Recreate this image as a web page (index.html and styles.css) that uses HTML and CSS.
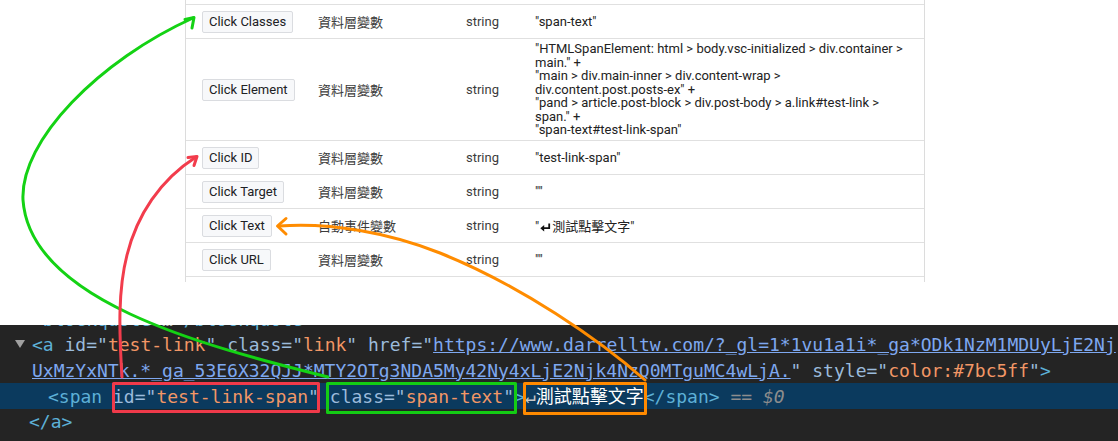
FILE: index.html
```html
<!DOCTYPE html>
<html lang="zh-Hant">
<head>
<meta charset="utf-8">
<title>Click variables</title>
<link rel="stylesheet" href="styles.css">
</head>
<body>
<div class="page">
  <section class="top">
    <div class="table">
      <div class="row spacer"></div>
      <div class="row">
        <div class="c1"><span class="btn">Click Classes</span></div>
        <div class="c2">資料層變數</div>
        <div class="c3">string</div>
        <div class="c4">"span-text"</div>
      </div>
      <div class="row tall">
        <div class="c1"><span class="btn">Click Element</span></div>
        <div class="c2">資料層變數</div>
        <div class="c3">string</div>
        <div class="c4 multi">"HTMLSpanElement: html &gt; body.vsc-initialized &gt; div.container &gt;<br>main." +<br>"main &gt; div.main-inner &gt; div.content-wrap &gt;<br>div.content.post.posts-ex" +<br>"pand &gt; article.post-block &gt; div.post-body &gt; a.link#test-link &gt;<br>span." +<br>"span-text#test-link-span"</div>
      </div>
      <div class="row">
        <div class="c1"><span class="btn">Click ID</span></div>
        <div class="c2">資料層變數</div>
        <div class="c3">string</div>
        <div class="c4">"test-link-span"</div>
      </div>
      <div class="row">
        <div class="c1"><span class="btn">Click Target</span></div>
        <div class="c2">資料層變數</div>
        <div class="c3">string</div>
        <div class="c4">""</div>
      </div>
      <div class="row">
        <div class="c1"><span class="btn">Click Text</span></div>
        <div class="c2">自動事件變數</div>
        <div class="c3">string</div>
        <div class="c4">"<svg class="ret" width="11" height="9" viewBox="0 0 11 9"><path d="M9.2 0.5 V5.2 H3.5" fill="none" stroke="#111" stroke-width="1.8"/><path d="M0.3 5.2 L4.2 2 L4.2 8.4 Z" fill="#111"/></svg>測試點擊文字"</div>
      </div>
      <div class="row">
        <div class="c1"><span class="btn">Click URL</span></div>
        <div class="c2">資料層變數</div>
        <div class="c3">string</div>
        <div class="c4">""</div>
      </div>
    </div>
  </section>

  <section class="devtools">
    <div class="line cut"><span class="tag">&lt;</span><span class="tag">blockquote&gt;</span><span class="ell">…</span><span class="tag">&lt;/blockquote&gt;</span></div>
    <div class="line"><span class="twisty"></span><span class="tag">&lt;a</span> <span class="an">id="</span><span class="av">test-link</span><span class="an">"</span> <span class="an">class="</span><span class="av">link</span><span class="an">"</span> <span class="an">href="</span><span class="lnk">https://www.darrelltw.com/?_gl=1*1vu1a1i*_ga*ODk1NzM1MDUyLjE2Nj</span></div>
    <div class="line"><span class="lnk">UxMzYxNTk.*_ga_53E6X32QJJ*MTY2OTg3NDA5My42Ny4xLjE2Njk4NzQ0MTguMC4wLjA.</span><span class="an">"</span> <span class="an">style="</span><span class="av">color:#7bc5ff</span><span class="an">"</span><span class="tag">&gt;</span></div>
    <div class="line sel"><span class="tag">&lt;span</span> <span class="an">id="</span><span class="av">test-link-span</span><span class="an">"</span> <span class="an">class="</span><span class="av">span-text</span><span class="an">"</span><span class="tag">&gt;</span><span class="nl">↵</span><span class="txt">測試點擊文字</span><span class="tag">&lt;/span&gt;</span><span class="dim"> == </span><span class="dim it">$0</span></div>
    <div class="line close"><span class="tag">&lt;/a&gt;</span></div>
  </section>

  <svg class="annot" width="1118" height="441" viewBox="0 0 1118 441" aria-hidden="true">
    <g fill="none" stroke-width="3" stroke-linecap="round" stroke-linejoin="round">
      <rect x="113.5" y="383.5" width="205" height="28" stroke="#f03a4a"/>
      <rect x="327.5" y="383.5" width="188" height="29" stroke="#14cc14"/>
      <rect x="524.5" y="383.5" width="121" height="30" stroke="#ff8a00"/>
      <path d="M328 377 C200 345 30 300 23 200 C20 140 100 60 193 18" stroke="#14d214"/>
      <path d="M185 19.5 L194 17.5 L192 28" stroke="#14d214"/>
      <path d="M122 377 C119 330 118 290 127 255 C137 215 160 180 196 157" stroke="#f23c4c"/>
      <path d="M188 157.5 L197 156.5 L194 165.5" stroke="#f23c4c"/>
      <path d="M645 380 C600 340 520 285 440 253 C390 233 330 222 279 226" stroke="#ff8c00"/>
      <path d="M286 218.5 L277.5 226 L286 234" stroke="#ff8c00"/>
    </g>
  </svg>
</div>
</body>
</html>
```

FILE: styles.css
```css
* { box-sizing: border-box; }

html, body {
  margin: 0;
  padding: 0;
  background: #ffffff;
}

body {
  width: 1118px;
  height: 441px;
  overflow: hidden;
  font-family: Roboto, "Noto Sans CJK TC", sans-serif;
}

.page {
  position: relative;
  width: 1118px;
  height: 441px;
}

/* ---------- variables table ---------- */
.top {
  height: 325px;
  background: #ffffff;
}

.table {
  margin-left: 185px;
  width: 740px;
  height: 282px;
  border-left: 1px solid #dcdcdc;
  border-right: 1px solid #dcdcdc;
}

.row {
  display: grid;
  grid-template-columns: 132px 148px 69px 1fr;
  align-items: center;
  height: 34px;
  border-bottom: 1px solid #e0e0e0;
}

.row.spacer { height: 5px; }
.row.tall { height: 102px; }

.c1 { padding-left: 16px; }

.btn {
  display: inline-block;
  height: 22px;
  line-height: 20px;
  padding: 0 6px;
  border: 1px solid #dadce0;
  border-radius: 2px;
  background: #f7f8fa;
  color: #202124;
  font-size: 13px;
  white-space: nowrap;
}

.c2 {
  font-family: "Noto Sans CJK TC", sans-serif;
  font-size: 13px;
  color: #3c3c3c;
}

.c3 {
  font-size: 13px;
  color: #3c3c3c;
}

.c4 {
  font-family: Roboto, "Noto Sans CJK TC", sans-serif;
  font-size: 13px;
  color: #222222;
  white-space: nowrap;
}

.c4.multi { line-height: 13.5px; }

.ret {
  display: inline-block;
  vertical-align: -1px;
  margin: 0 1px 0 1px;
}

/* ---------- devtools panel ---------- */
.devtools {
  height: 116px;
  overflow: hidden;
  background: #242424;
  font-family: "DejaVu Sans Mono", "Noto Sans CJK TC", monospace;
  font-size: 18px;
  color: #e8eaed;
}

.line {
  height: 25.5px;
  line-height: 25.5px;
  white-space: pre;
  padding-left: 32px;
}

.line.cut { margin-top: -18.5px; }
.line.sel { background: #0b3a5e; padding-left: 48px; }
.line.close { padding-left: 29px; }

.twisty {
  display: inline-block;
  width: 0;
  height: 0;
  border-left: 5px solid transparent;
  border-right: 5px solid transparent;
  border-top: 8px solid #a0a0a0;
  margin-left: -17px;
  margin-right: 7px;
  vertical-align: 3px;
}

.tag { color: #5db0d7; }
.an { color: #9bbbdc; }
.av { color: #f29766; }
.lnk { color: #7ea8f0; text-decoration: underline; }
.txt { color: #ffffff; font-family: "Noto Sans CJK TC", sans-serif; }
.nl { color: #c8c8c8; }
.ell { color: #b0b0b0; }
.dim { color: #8d8d8d; }
.it { font-style: italic; }

/* ---------- annotation overlay ---------- */
.annot {
  position: absolute;
  left: 0;
  top: 0;
  pointer-events: none;
}
```
